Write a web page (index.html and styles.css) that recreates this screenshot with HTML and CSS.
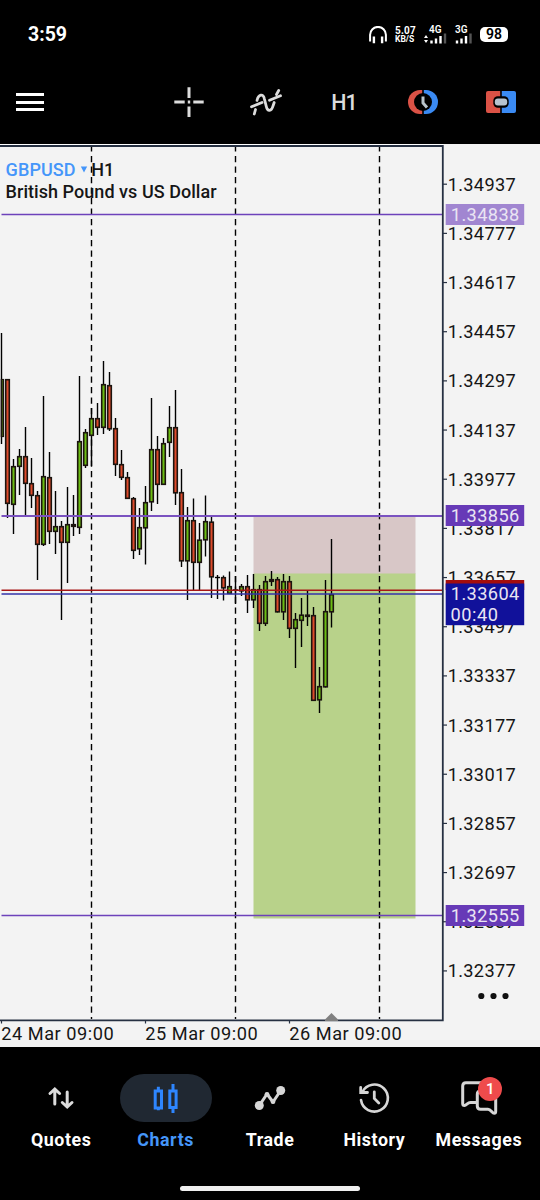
FILE: index.html
```
<!DOCTYPE html>
<html lang="en">
<head>
  <meta charset="UTF-8">
  <meta name="viewport" content="width=device-width, initial-scale=1.0">
  <title>GBPUSD H1</title>
  <link rel="stylesheet" href="styles.css">
</head>

<body>
  <div class="status-bar">
    <span class="clock">3:59</span>
    <div class="status-icons">
      <svg class="icon" width="18" height="18" viewBox="0 0 18 18">
        <path d="M1.1 15.5V8.8a7.9 7.9 0 0 1 15.8 0v6.7" stroke-width="2"/>
        <path d="M4.9 10.5v6.7M13.1 10.5v6.7" stroke-width="2.4"/>
      </svg>
      <div class="speed"><span>5.07</span><span class="unit">KB/S</span></div>
      <div class="signal signal-wide">
        <span>4G</span>
        <svg width="23" height="11" viewBox="0 0 23 11">
          <path d="M0 5l2-3 2 3zM0 7l2 3 2-3z" fill="#fff"/>
          <path d="M7.5 10.5v-3M12 10.5v-5M16.5 10.5V3" stroke="#fff" stroke-width="2.4"/>
          <path d="M21 10.5V.5" stroke="#555" stroke-width="2.4"/>
        </svg>
      </div>
      <div class="signal">
        <span>3G</span>
        <svg width="17" height="11" viewBox="0 0 17 11">
          <path d="M2 10.5v-3M6.5 10.5v-5M11 10.5V3" stroke="#fff" stroke-width="2.4"/>
          <path d="M15.5 10.5V.5" stroke="#555" stroke-width="2.4"/>
        </svg>
      </div>
      <div class="battery">98</div>
    </div>
  </div>

  <div class="toolbar">
    <div class="menu"><span></span><span></span><span></span></div>
    <div class="tools">
      <div class="tool">
        <svg class="icon" width="32" height="32" viewBox="0 0 32 32">
          <path d="M1.3 16h10.4M20.3 16h10.4M16 1.3V12M16 20.600v10.4M14.800 16h2.4" stroke="#dcdcdc" stroke-width="3"/>
        </svg>
      </div>
      <div class="tool">
        <svg class="icon" width="34" height="32" viewBox="0 0 34 32">
          <g stroke="#dcdcdc" stroke-width="2.8" stroke-linecap="round">
            <path d="M1.500 20.800L12 16.500M19.500 14.300L30.500 9.800"/>
            <path d="M4.300 28L5.500 23.500M26.500 8.500L28.700 4.500"/>
            <path d="M7 14.500C8.500 8 13.300 7.500 14.300 12.500L16.300 20.500C17.500 26 21.500 25.500 23 20L24.200 16.500"/>
          </g>
        </svg>
      </div>
      <div class="tool timeframe">H1</div>
      <div class="tool">
        <svg width="32" height="32" viewBox="0 0 32 32">
          <path d="M15.200 4H13a12 12 0 0 0 0 24h2.200z" fill="#db5246"/>
          <path d="M16.800 4H19a12 12 0 0 1 0 24h-2.200z" fill="#3a8af3"/>
          <circle cx="16" cy="16" r="9" fill="#000"/>
          <path d="M16 10.500v6.500l4 4.500" fill="none" stroke="#b9c4cc" stroke-width="3"/>
        </svg>
      </div>
      <div class="tool">
        <svg width="32" height="32" viewBox="0 0 32 32">
          <path d="M15.200 5H3a2 2 0 0 0-2 2v18a2 2 0 0 0 2 2h12.200z" fill="#db5246"/>
          <path d="M16.800 5H29a2 2 0 0 1 2 2v18a2 2 0 0 1-2 2H16.800z" fill="#3a8af3"/>
          <rect x="8.300" y="10.300" width="15.400" height="11.400" rx="4.500" fill="#000"/>
          <rect x="9.800" y="12.600" width="12.400" height="6.800" rx="3" fill="#b6c3cf"/>
        </svg>
      </div>
    </div>
  </div>

  <!-- plot, price scale and time scale share one coordinate space -->
  <svg class="chart" width="540" height="903" viewBox="0 144 540 903">
    <rect x="253.500" y="517" width="162" height="57" fill="#d8c7c7"/>
    <rect x="253.500" y="573.500" width="162" height="345" fill="#b8d28a"/>

    <g class="day-lines">
      <path d="M91.500 156V1019M235.500 156V1019M379.500 156V1019"/>
      <path d="M91.500 147v4.500M235.500 147v4.500M379.500 147v4.500"/>
    </g>

    <g id="candles"></g>

    <path class="level" d="M1.500 214.500H442M1.500 915.500H442"/>
    <path class="level level-entry" d="M1.500 516H442"/>
    <path d="M1.500 590.300H442" stroke="#a81616" stroke-width="1.500"/>
    <path d="M1.500 594H442" stroke="#3333a8" stroke-width="1.600"/>

    <path class="frame-glow" d="M0 144.500H443"/>
    <path class="frame" d="M0 146H442.800V1020.300H0"/>
    <path class="time-ticks" d="M1.500 1021v2.500M145.500 1021v2.500M289.500 1021v2.500"/>
    <path d="M325 1021v-1.500l6.500-6.500 6.500 6.500v1.500z" fill="#808080"/>

    <g id="prices"></g>

    <rect x="445.700" y="204" width="78.500" height="21" fill="#a186d1"/>
    <rect x="445.700" y="505" width="78.500" height="21" fill="#673ab7"/>
    <rect x="445.700" y="905" width="78.500" height="21" fill="#673ab7"/>
    <rect x="445.700" y="580" width="78.500" height="10" fill="#a30d0d"/>
    <rect x="445.700" y="583.500" width="78.500" height="41.700" fill="#11119a"/>
    <g class="tag-text">
      <text x="450.800" y="220.700" textLength="68.500">1.34838</text>
      <text x="450.800" y="521.700" textLength="68.500">1.33856</text>
      <text x="450.800" y="599.800" textLength="68.500">1.33604</text>
      <text x="450.500" y="621" textLength="47.500">00:40</text>
      <text x="450.800" y="921.700" textLength="68.500">1.32555</text>
    </g>

    <g class="scale-text">
      <text x="1.200" y="1039.500" textLength="112.500">24 Mar 09:00</text>
      <text x="145.200" y="1039.500" textLength="112.500">25 Mar 09:00</text>
      <text x="289.200" y="1039.500" textLength="112.500">26 Mar 09:00</text>
    </g>

    <g class="title">
      <text class="symbol" x="5.600" y="175.500" textLength="70">GBPUSD</text>
      <path d="M80.800 166.500h6.400l-3.200 6z" fill="#4596fa"/>
      <text x="91.300" y="175.500" textLength="23">H1</text>
      <text x="5.600" y="197.500" textLength="211">British Pound vs US Dollar</text>
    </g>

    <g fill="#111">
      <circle cx="481.300" cy="996" r="3.100"/>
      <circle cx="493.500" cy="996" r="3.100"/>
      <circle cx="505.500" cy="996" r="3.100"/>
    </g>
  </svg>

  <nav class="tabs">
    <a class="tab">
      <span class="tab-icon">
        <svg class="icon" width="48" height="48" viewBox="0 0 48 48">
          <path d="M17.800 30V15.500M13 19.500l4.800-4.500 4.800 4.500M30.200 18v14.500M25.300 28.500l4.900 4.500 4.800-4.500" stroke="#dcdcdc" stroke-width="3" stroke-linecap="round"/>
        </svg>
      </span>
      Quotes
    </a>
    <a class="tab active">
      <span class="tab-icon">
        <svg class="icon" width="48" height="48" viewBox="0 0 48 48">
          <path d="M13.200 17h6.300v17h-6.300zM16.350 12.700V17M16.350 34v2.200M27.800 17h6.300v16.500h-6.300zM31 10v7M31 33.500v5.500" stroke="#2e86ff" stroke-width="3"/>
        </svg>
      </span>
      Charts
    </a>
    <a class="tab">
      <span class="tab-icon">
        <svg class="icon" width="48" height="48" viewBox="0 0 48 48">
          <path d="M13.300 31.500L21 20l6 8 7.700-11.500" stroke="#d6d6d6" stroke-width="3" stroke-linejoin="round"/>
          <g fill="#d6d6d6" stroke="none">
            <circle cx="13.300" cy="31.500" r="4.500"/>
            <circle cx="21" cy="20.300" r="2.400"/>
            <circle cx="27" cy="27.700" r="2.400"/>
            <circle cx="34.700" cy="16.500" r="4.500"/>
          </g>
        </svg>
      </span>
      Trade
    </a>
    <a class="tab">
      <span class="tab-icon">
        <svg class="icon" width="48" height="48" viewBox="0 0 48 48">
          <path d="M11 26a13.500 13.500 0 1 0 1.300-8" stroke="#d6d6d6" stroke-width="2.600" stroke-linecap="round"/>
          <path d="M10.700 13.500v5h6.800M24.300 17.800v6.700l4.500 4.500" stroke="#d6d6d6" stroke-width="2.800" stroke-linecap="round"/>
        </svg>
      </span>
      History
    </a>
    <a class="tab">
      <span class="tab-icon">
        <svg class="icon" width="48" height="48" viewBox="0 0 48 48">
          <g stroke="#d6d6d6" stroke-width="3" stroke-linejoin="round">
            <path d="M21.500 28.500h-6c-3 0-4 3-6 3-1.300 0-1.800-.8-1.800-2V12c0-2 1.200-3.200 3.200-3.200H30"/>
            <path d="M30 17h-4.500c-2 0-3.200 1.200-3.200 3.200V32c0 2 1.200 3.300 3.200 3.300H33c3 0 4 4 6.200 4 1.300 0 1.500-.8 1.500-2V22"/>
          </g>
        </svg>
        <span class="badge">1</span>
      </span>
      Messages
    </a>
  </nav>
  <div class="home-indicator"></div>

  <script src="chart.js"></script>
</body>
</html>
```
FILE: styles.css
```
body {
  margin: 0;
  width: 540px;
  height: 1200px;
  overflow: hidden;
  background: #000;
  color: #fff;
  font-family: Roboto, sans-serif;
  display: flex;
  flex-direction: column;
}

svg {
  display: block;
}

.icon {
  fill: none;
  stroke: #fff;
}

/* status bar */
.status-bar {
  box-sizing: border-box;
  height: 60px;
  padding: 9px 30px 0 28px;
  display: flex;
  align-items: center;
  justify-content: space-between;
}

.clock {
  font-size: 19.5px;
  font-weight: 700;
}

.status-icons {
  display: flex;
  align-items: center;
  gap: 8px;
}

.speed {
  width: 21px;
  display: flex;
  flex-direction: column;
  font-size: 10px;
  font-weight: 700;
  line-height: 8px;
  letter-spacing: 0.2px;
  white-space: nowrap;
}

.speed .unit {
  font-size: 8.5px;
  letter-spacing: 0;
}

.signal {
  width: 17px;
  height: 18px;
  display: flex;
  flex-direction: column;
  font-size: 10px;
  font-weight: 600;
  line-height: 8px;
}

.signal svg {
  margin-top: -1px;
}

.signal-wide {
  width: 23px;
}

.signal-wide span {
  padding-left: 5px;
}

.battery {
  width: 28px;
  height: 15px;
  margin-right: 2px;
  border-radius: 5px;
  background: #fff;
  color: #000;
  font-size: 14px;
  font-weight: 600;
  line-height: 15px;
  text-align: center;
}

/* toolbar */
.toolbar {
  height: 84px;
  display: flex;
  align-items: center;
  justify-content: space-between;
}

.menu {
  width: 28px;
  margin-left: 16px;
  display: flex;
  flex-direction: column;
  gap: 4.5px;
}

.menu span {
  height: 3px;
  background: #fff;
}

.tools {
  display: flex;
}

.tool {
  width: 78px;
  height: 32px;
  display: flex;
  align-items: center;
  justify-content: center;
}

.timeframe {
  box-sizing: border-box;
  padding-right: 2px;
  color: #dcdcdc;
  font-size: 21.5px;
  font-weight: 500;
  letter-spacing: -1px;
}

/* chart */
.chart {
  background: #f3f3f3;
  flex: none;
}

.day-lines {
  stroke: #000;
  stroke-width: 1.4;
}

.day-lines path:first-child {
  stroke-dasharray: 6.3 4.2;
}

.wick {
  stroke: #000;
  stroke-width: 1.4;
}

.body {
  stroke: #1c140f;
  stroke-width: 1.6;
}

.up {
  fill: #6bbd12;
}

.down {
  fill: #de4a2b;
}

.level {
  stroke: #6d42ba;
  stroke-width: 1.3;
}

.level-entry {
  stroke: #7a52c0;
  stroke-width: 1.8;
}

.frame {
  fill: none;
  stroke: #263042;
  stroke-width: 1.8;
}

.frame-glow {
  stroke: #fff;
}

.time-ticks,
.tick {
  stroke: #263042;
  stroke-width: 1.2;
}

.scale-text {
  fill: #161616;
  font-size: 18.2px;
}

.tag-text {
  fill: #e9e4f3;
  font-size: 18.2px;
}

.title {
  fill: #161616;
  font-size: 18px;
  font-weight: 500;
}

.symbol {
  fill: #4596fa;
}

/* bottom tabs */
.tabs {
  display: flex;
  padding: 27px 9px 0;
}

.tab {
  flex: 1;
  display: flex;
  flex-direction: column;
  align-items: center;
  gap: 7px;
  font-size: 17.8px;
  font-weight: 700;
  line-height: 21px;
  letter-spacing: 0.6px;
}

.tab-icon {
  position: relative;
  width: 92px;
  height: 48px;
  border-radius: 24px;
  display: flex;
  justify-content: center;
}

.active {
  color: #4596fa;
}

.active .tab-icon {
  background: #202832;
}

.badge {
  position: absolute;
  left: 45.5px;
  top: 3px;
  width: 24px;
  height: 24px;
  border-radius: 50%;
  background: #ef4b4c;
  color: #fff;
  font-size: 15px;
  font-weight: 500;
  line-height: 24px;
  letter-spacing: 0;
  text-align: center;
}

.home-indicator {
  width: 180px;
  height: 5px;
  margin: 36px auto 0;
  border-radius: 2.5px;
  background: #f0f0f0;
}
```
FILE: chart.js
```
const NS = 'http://www.w3.org/2000/svg';

// high, body top, body bottom, low, direction (1 up, 0 down)
const candles = [
  [333, 379, 437, 444, 1], [379, 379, 504, 518, 0], [459, 466, 505, 534, 1], [449, 456, 467, 495, 1],
  [427, 456, 484, 516, 0], [458, 483, 496, 508, 0], [491, 495, 545, 580, 0], [396, 476, 545, 546, 1],
  [452, 477, 532, 544, 0], [491, 526, 532, 554, 1], [521, 526, 543, 620, 0], [487, 524, 543, 583, 1],
  [495, 524, 527, 536, 0], [376, 441, 528, 534, 1], [429, 432, 466, 468, 1], [408, 418, 436, 466, 1],
  [403, 418, 428, 435, 0], [361, 384, 428, 434, 1], [372, 385, 429.5, 431, 0], [418, 428, 465, 476, 0],
  [450, 464, 478, 480, 0], [472, 477, 499, 499, 0], [497, 498, 551, 559, 0], [508, 527, 549.5, 555, 1],
  [486, 502, 528.5, 564.5, 1], [398, 449, 502.5, 511, 1], [436, 449, 485, 504, 0], [438, 443, 485, 485, 1],
  [406, 427, 443, 457, 1], [390, 427, 493.5, 505, 0], [469, 492, 561.5, 567, 0], [507, 520, 561.5, 600, 1],
  [498.5, 520, 563, 590, 0], [523, 539.5, 563, 590, 1], [495.5, 521, 540.5, 556.5, 1], [516, 521.5, 577.5, 598, 0],
  [575, 577, 578, 599, 1], [575.5, 577, 588.5, 600.5, 0], [571.5, 586, 594, 594, 1], [576, 589.5, 590.5, 604, 1],
  [584, 586, 591.5, 596, 1], [575, 586, 600.5, 613, 0], [574, 589, 600.5, 608, 1], [585, 589, 624, 631, 0],
  [576, 581, 624, 626, 1], [571, 579, 582, 586, 0], [577, 579, 612.5, 612.5, 0], [574, 581, 612.5, 620, 1],
  [576, 581, 629, 638, 0], [613, 619, 629, 668, 1], [598, 614.5, 621, 647, 1], [591, 614.5, 617, 626, 0],
  [607, 615, 701, 701, 0], [667, 686, 700.5, 713, 1], [580, 611, 687.5, 687.5, 1], [539, 594, 612.5, 627.5, 1]
];

function add(parent, name, attrs, text) {
  const el = document.createElementNS(NS, name);
  for (const key in attrs) el.setAttribute(key, attrs[key]);
  if (text) el.textContent = text;
  parent.appendChild(el);
}

const plot = document.getElementById('candles');
candles.forEach(([high, top, bottom, low, up], i) => {
  const x = 1.5 + i * 6;
  add(plot, 'path', { class: 'wick', d: `M${x} ${high}V${low}` });
  if (bottom - top <= 1) {
    add(plot, 'path', { class: 'wick', d: `M${x - 2.5} ${top + 0.5}h5` });
    return;
  }
  // the first candle is cut by the left edge of the plot
  const left = i === 0 ? x : x - 1.8;
  add(plot, 'rect', {
    class: 'body ' + (up ? 'up' : 'down'),
    x: left,
    y: top + 0.7,
    width: x + 1.8 - left,
    height: Math.max(bottom - top - 1.4, 0.5)
  });
});

const prices = document.getElementById('prices');
prices.setAttribute('class', 'scale-text');
for (let i = 0; i < 17; i++) {
  const y = 184.2 + i * 49.17;
  add(prices, 'path', { class: 'tick', d: `M443 ${y}h4` });
  add(prices, 'text', { x: 447.7, y: y + 6.5, textLength: 68 }, ((134937 - i * 160) / 100000).toFixed(5));
}
```
